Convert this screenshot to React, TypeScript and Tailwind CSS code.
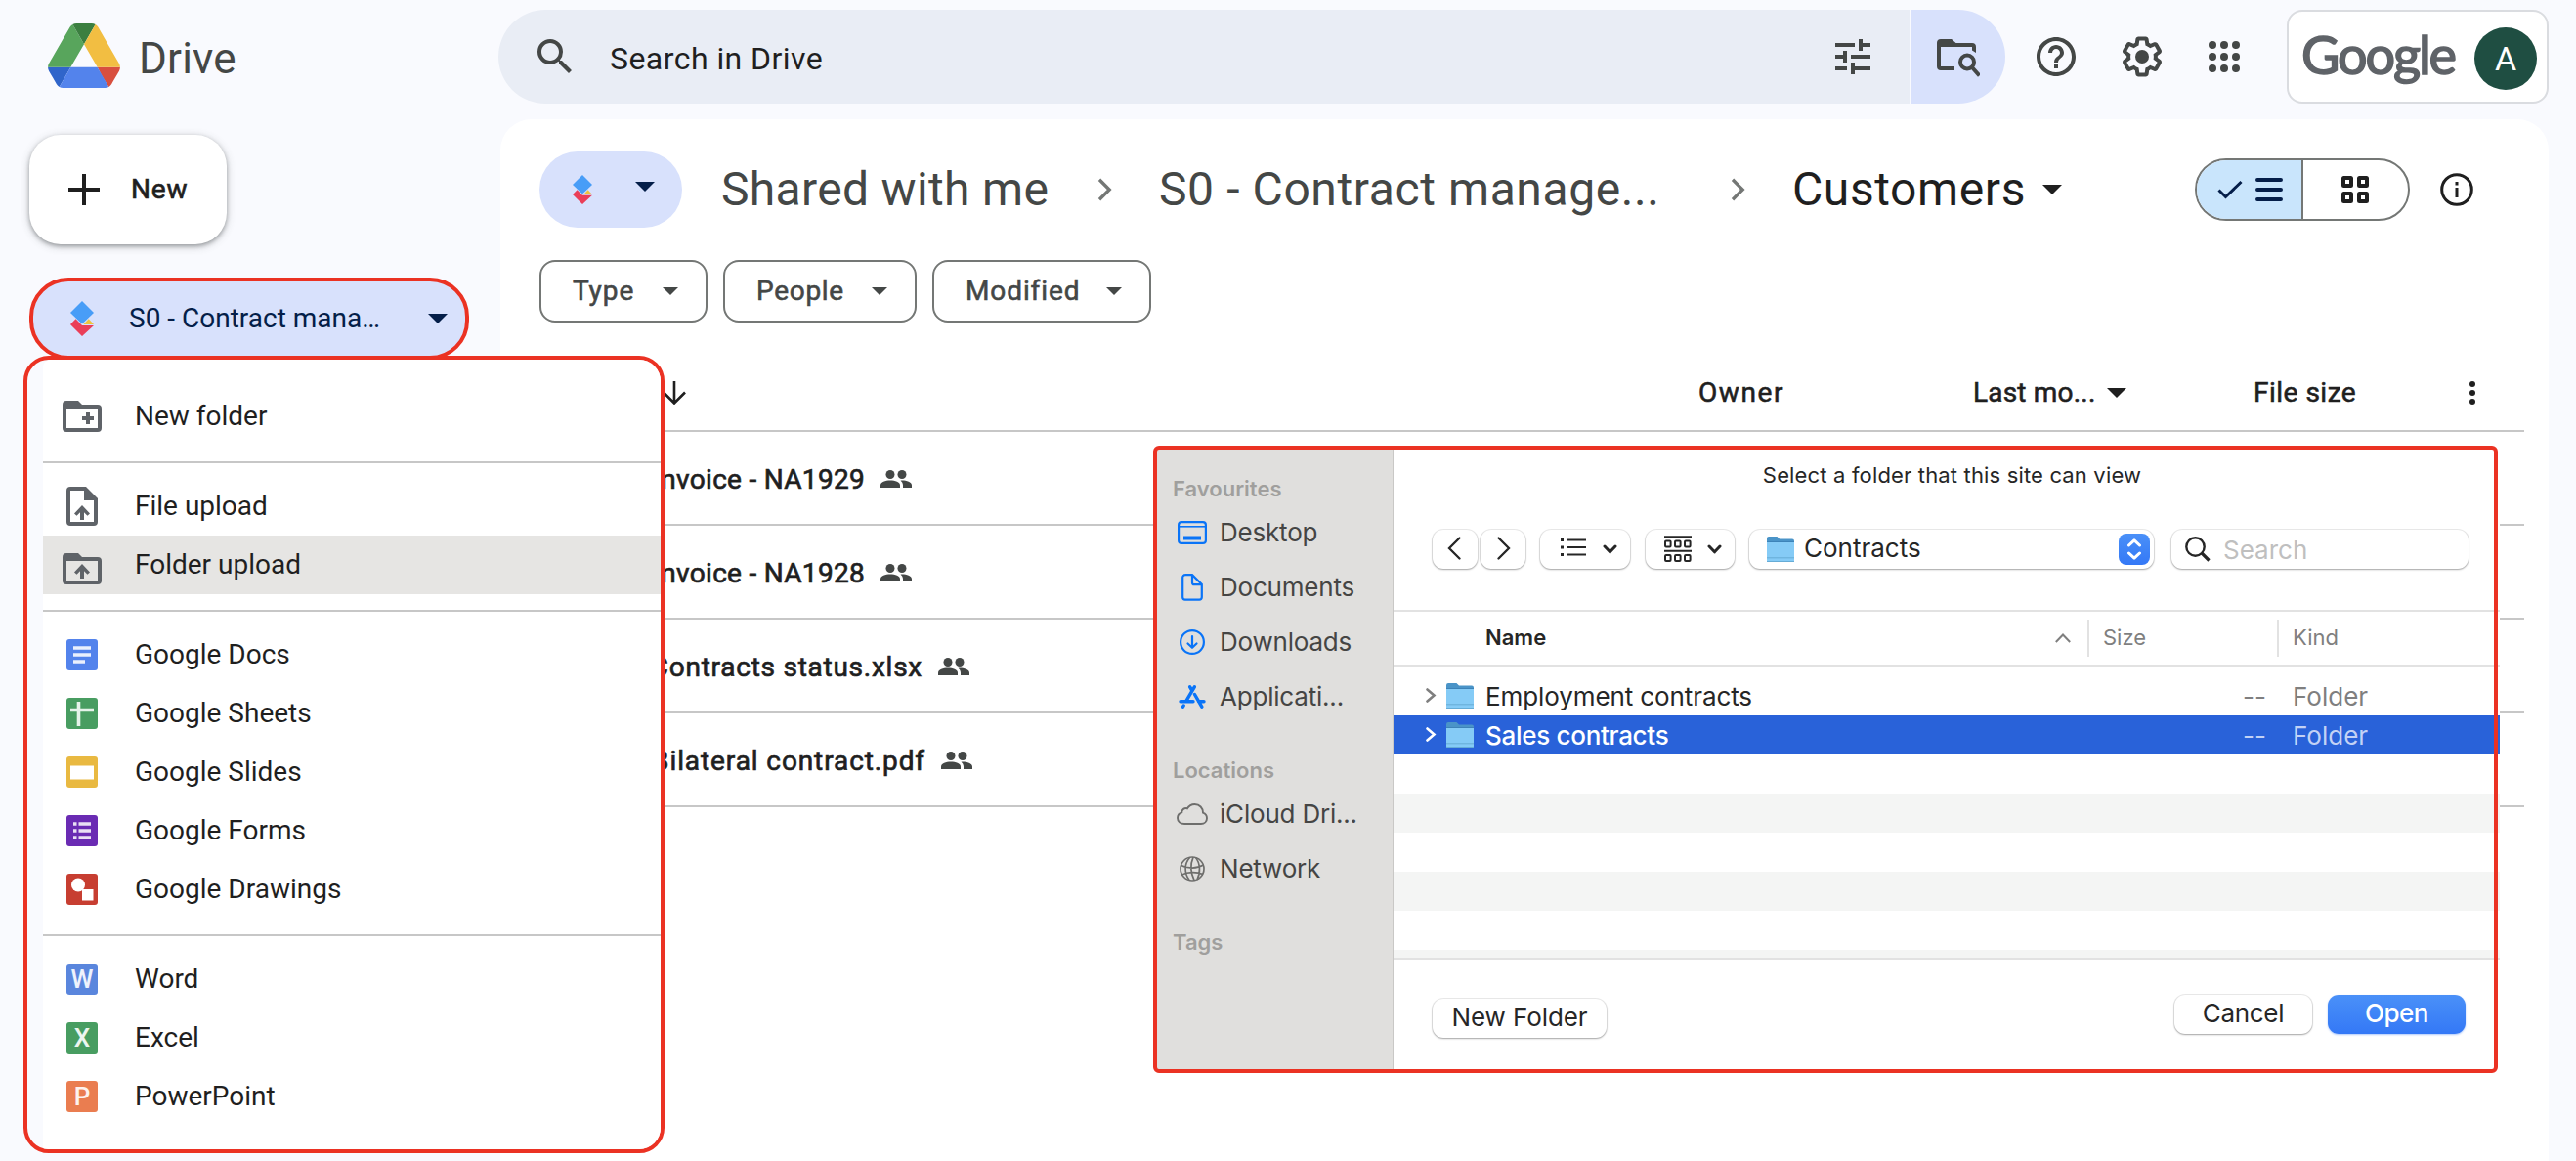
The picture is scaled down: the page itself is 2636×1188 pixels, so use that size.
import type { ReactNode } from "react";
import { MdSearch, MdTune, MdHelpOutline } from "react-icons/md";

/* ---------- Shared glyphs ---------- */

function DriveLogo() {
  return (
    <svg className="h-[66px] w-[74px]" viewBox="0 0 87.3 78">
      <path d="m6.6 66.85 3.85 6.65c.8 1.4 1.95 2.5 3.3 3.3l13.75-23.8h-27.5c0 1.55.4 3.1 1.2 4.5z" fill="#3065ca" />
      <path d="m43.65 25-13.75-23.8c-1.35.8-2.5 1.9-3.3 3.3l-25.4 44a9.06 9.06 0 0 0-1.2 4.5h27.5z" fill="#58a55c" />
      <path d="m73.55 76.8c1.35-.8 2.5-1.9 3.3-3.3l1.6-2.75 7.65-13.25c.8-1.4 1.2-2.95 1.2-4.5h-27.502l5.852 11.5z" fill="#d84f3f" />
      <path d="m43.65 25 13.75-23.8c-1.35-.8-2.9-1.2-4.5-1.2h-18.5c-1.6 0-3.15.45-4.5 1.2z" fill="#3b7f40" />
      <path d="m59.8 53h-32.3l-13.75 23.8c1.35.8 2.9 1.2 4.5 1.2h50.8c1.6 0 3.15-.45 4.5-1.2z" fill="#5383ec" />
      <path d="m73.4 26.5-12.7-22c-.8-1.4-1.95-2.5-3.3-3.3l-13.75 23.8 16.15 28h27.45c0-1.55-.4-3.1-1.2-4.5z" fill="#f2be42" />
    </svg>
  );
}

function BrandMark({ className }: { className: string }) {
  return (
    <svg className={className} viewBox="0 0 24 36">
      <path d="M12 0 24 12 12 23.5 0 12z" fill="#489df7" />
      <path d="M5.5 18.3 12 25H24L12 36 0 24z" fill="#ea3e58" />
      <path d="M18.8 18.3 24 24H13.4z" fill="#edc43e" />
    </svg>
  );
}

function Caret({ className }: { className: string }) {
  return (
    <svg className={className} viewBox="0 0 20 10" preserveAspectRatio="none">
      <path d="M0 0H20L10 10z" fill="currentColor" />
    </svg>
  );
}

function CrumbChevron() {
  return (
    <svg className="h-6 w-4 text-[#747775]" viewBox="0 0 16 24" fill="none" stroke="currentColor" strokeWidth="3.4">
      <path d="M2 1.8 12.2 12 2 22.2" />
    </svg>
  );
}

/* ---------- Header ---------- */

function FolderSearchIcon() {
  return (
    <svg className="h-12 w-12 text-[#444746]" viewBox="0 0 48 48" fill="none">
      <path
        d="M4 10a4 4 0 0 1 4-4h11l4.5 4H40a4 4 0 0 1 4 4v6l-4-2.6V14H8v20h14v4H8a4 4 0 0 1-4-4z"
        fill="currentColor"
      />
      <path d="M8 10h32v4H8z" fill="currentColor" />
      <circle cx="35" cy="29.5" r="7" stroke="currentColor" strokeWidth="4" />
      <path d="m40 35 7.5 8.5" stroke="currentColor" strokeWidth="4" />
    </svg>
  );
}

function SettingsIcon() {
  return (
    <svg className="h-12 w-12 text-[#444746]" viewBox="0 0 24 24" fill="currentColor">
      <path d="M13.85 22.25h-3.7c-.74 0-1.36-.54-1.45-1.27l-.27-1.89c-.27-.14-.53-.29-.79-.46l-1.8.72c-.7.26-1.47-.03-1.81-.65L2.2 15.53c-.35-.66-.2-1.44.36-1.88l1.53-1.19c-.01-.15-.02-.3-.02-.46 0-.15.01-.31.02-.46l-1.52-1.19c-.59-.45-.74-1.26-.37-1.88l1.85-3.19c.34-.62 1.11-.9 1.79-.63l1.81.73c.26-.17.52-.32.78-.46l.27-1.91c.09-.7.71-1.25 1.44-1.25h3.7c.74 0 1.36.54 1.45 1.27l.27 1.89c.27.14.53.29.79.46l1.8-.72c.71-.26 1.48.03 1.82.65l1.84 3.18c.36.66.2 1.44-.36 1.88l-1.52 1.19c.01.15.02.3.02.46s-.01.31-.02.46l1.52 1.19c.56.45.72 1.23.37 1.86l-1.86 3.22c-.34.62-1.11.9-1.8.63l-1.8-.72c-.26.17-.52.32-.78.46l-.27 1.91c-.1.68-.72 1.22-1.46 1.22zm-3.23-2h2.76l.37-2.55.53-.22c.44-.18.88-.44 1.34-.78l.45-.34 2.38.96 1.38-2.4-2.03-1.58.07-.56c.03-.26.06-.51.06-.78s-.03-.53-.06-.78l-.07-.56 2.03-1.58-1.39-2.4-2.39.96-.45-.35c-.42-.32-.87-.58-1.33-.77l-.52-.22-.37-2.55h-2.76l-.37 2.55-.53.21c-.44.19-.88.44-1.34.79l-.45.33-2.38-.95-1.39 2.39 2.03 1.58-.07.56a7 7 0 0 0-.06.79c0 .26.02.53.06.78l.07.56-2.03 1.58 1.38 2.4 2.39-.96.45.35c.43.33.86.58 1.33.77l.53.22z" />
      <circle cx="12" cy="12" r="3.5" />
    </svg>
  );
}

function AppsIcon() {
  return (
    <svg className="h-12 w-12 text-[#444746]" viewBox="0 0 48 48" fill="currentColor">
      {[12, 24, 36].map((y) => [12, 24, 36].map((x) => <circle key={`${x}-${y}`} cx={x} cy={y} r="4" />))}
    </svg>
  );
}

function Header() {
  return (
    <header className="flex h-[122px] items-start">
      <div className="flex w-[510px] shrink-0 items-start pt-6 pl-[49px]">
        <DriveLogo />
        <span className="mt-[3px] ml-[19px] text-[44px] leading-[66px] tracking-[0.2px] text-[#444746]">Drive</span>
      </div>
      <div className="mt-[10px] flex h-24 w-[1444px] shrink-0 items-center rounded-l-[48px] bg-[#e9edf5]">
        <MdSearch className="ml-[34px] size-12 text-[#444746]" />
        <span className="mt-[3px] ml-8 text-[32px] tracking-[0.45px] text-[#1f1f1f]">Search in Drive</span>
        <MdTune className="mr-[34px] ml-auto size-12 text-[#444746]" />
      </div>
      <div className="mt-[10px] ml-[2px] flex h-24 w-24 shrink-0 items-center rounded-r-[48px] bg-[#d8e1fc] pl-[22px]">
        <FolderSearchIcon />
      </div>
      <div className="mt-[34px] ml-7 flex shrink-0">
        <MdHelpOutline className="size-12 text-[#444746]" />
        <div className="ml-10">
          <SettingsIcon />
        </div>
        <div className="ml-9">
          <AppsIcon />
        </div>
      </div>
      <div className="mt-[10px] ml-10 flex h-24 w-[268px] shrink-0 items-center justify-between rounded-2xl border-2 border-[#dadce0] bg-white pr-[10px] pl-[13px]">
        <span className="-mt-1 font-['Lato'] text-[54px] leading-none tracking-[-2.1px] text-[#5f6368] [-webkit-text-stroke:1.6px_#5f6368]">
          Google
        </span>
        <span className="mt-1 flex size-16 items-center justify-center rounded-full bg-[#1f4e42] pt-px text-[34px] text-white">A</span>
      </div>
    </header>
  );
}

/* ---------- Left rail ---------- */

function Rail() {
  return (
    <aside className="w-[512px] shrink-0">
      <button className="mt-4 ml-[30px] flex h-28 w-[202px] items-center rounded-[32px] bg-white pl-10 shadow-[0_2px_4px_rgba(60,64,67,0.4),0_2px_8px_1px_rgba(60,64,67,0.2)]">
        <svg className="size-8" viewBox="0 0 32 32" stroke="#1f1f1f" strokeWidth="4">
          <path d="M16 0v32M0 16h32" />
        </svg>
        <span className="ml-8 text-[28px] tracking-[0.8px] text-[#1f1f1f] [-webkit-text-stroke:0.7px]">New</span>
      </button>
      <button className="mt-[34px] ml-[30px] flex h-[84px] w-[450px] items-center rounded-[40px] border-4 border-[#eb3223] bg-[#d8e1fc] pr-[18px] pl-[38px] text-[#041e49]">
        <BrandMark className="h-9 w-6" />
        <span className="ml-9 text-[28px] whitespace-nowrap">S0 - Contract mana…</span>
        <Caret className="ml-auto h-[10px] w-5" />
      </button>
    </aside>
  );
}

/* ---------- "New" menu ---------- */

function FolderGlyph({ children }: { children: ReactNode }) {
  return (
    <svg className="h-8 w-10" viewBox="0 0 40 32">
      <path d="M4 0h12l4 4h16a4 4 0 0 1 4 4v20a4 4 0 0 1-4 4H4a4 4 0 0 1-4-4V4a4 4 0 0 1 4-4zM4 8v20h32V8z" fill="#5f6368" fillRule="evenodd" />
      {children}
    </svg>
  );
}

const newFolderIcon = (
  <FolderGlyph>
    <path d="M26 12v12M20 18h12" stroke="#5f6368" strokeWidth="4" />
  </FolderGlyph>
);

const folderUploadIcon = (
  <FolderGlyph>
    <path d="M12 19.5 20 11l8 8.500-2.500 2.200-3.500-3.500V26h-4v-7.800l-3.500 3.500z" fill="#5f6368" />
  </FolderGlyph>
);

const fileUploadIcon = (
  <svg className="h-10 w-8" viewBox="0 0 32 40">
    <path d="M4 0h16l12 12v24a4 4 0 0 1-4 4H4a4 4 0 0 1-4-4V4a4 4 0 0 1 4-4zM4 4v32h24V14H18V4z" fill="#5f6368" fillRule="evenodd" />
    <path d="M8 27.500 16 19l8 8.500-2.500 2.200-3.500-3.500V34h-4v-7.800l-3.500 3.500z" fill="#5f6368" />
  </svg>
);

function Tile({ color, children }: { color: string; children: ReactNode }) {
  return (
    <svg className="size-8" viewBox="0 0 32 32">
      <rect width="32" height="32" rx="3" fill={color} />
      {children}
    </svg>
  );
}

function LetterTile({ letter, className }: { letter: string; className: string }) {
  return (
    <span className={`flex size-8 items-center justify-center rounded-[3px] text-[26px] leading-8 font-medium text-white/90 ${className}`}>
      {letter}
    </span>
  );
}

type MenuEntry = { label: string; icon: ReactNode; active?: boolean };

const menuGroups: MenuEntry[][] = [
  [{ label: "New folder", icon: newFolderIcon }],
  [
    { label: "File upload", icon: fileUploadIcon },
    { label: "Folder upload", icon: <span className="mt-2">{folderUploadIcon}</span>, active: true },
  ],
  [
    {
      label: "Google Docs",
      icon: (
        <Tile color="#5383ec">
          <path d="M7 9h18M7 16h18M7 23h12" stroke="#eaf0fd" strokeWidth="3.6" />
        </Tile>
      ),
    },
    {
      label: "Google Sheets",
      icon: (
        <Tile color="#489d61">
          <path d="M12.500 4v25M4 12.500h24" stroke="#e6f3ea" strokeWidth="3.600" />
        </Tile>
      ),
    },
    {
      label: "Google Slides",
      icon: (
        <Tile color="#e9b941">
          <rect x="4" y="9.500" width="24" height="14" fill="#fff" />
        </Tile>
      ),
    },
    {
      label: "Google Forms",
      icon: (
        <Tile color="#6a2bb3">
          <path d="M7 9h3.500M12.500 9H25M7 16h3.500M12.500 16H25M7 23h3.500M12.500 23H25" stroke="#e9dff4" strokeWidth="3.600" />
        </Tile>
      ),
    },
    {
      label: "Google Drawings",
      icon: (
        <Tile color="#c73e31">
          <circle cx="12" cy="11.500" r="7" fill="#fff" />
          <rect x="16" y="16" width="11.500" height="11.500" fill="#fff" />
        </Tile>
      ),
    },
  ],
  [
    { label: "Word", icon: <LetterTile letter="W" className="bg-[#5a86dd]" /> },
    { label: "Excel", icon: <LetterTile letter="X" className="bg-[#489d61]" /> },
    { label: "PowerPoint", icon: <LetterTile letter="P" className="bg-[#ea7d50]" /> },
  ],
];

function NewMenu() {
  return (
    <div className="absolute top-[364px] left-6 h-[816px] w-[656px] overflow-hidden rounded-[26px] border-4 border-[#eb3223] bg-[#f9fafe] pl-4">
      <ul className="h-full rounded-tl-lg bg-white pt-3">
        {menuGroups.map((group, i) => (
          <li key={i} className={i === 0 ? "py-4" : "border-t-2 border-[#c7c7c7] pt-[14px] pb-4"}>
            {group.map((entry) => (
              <div key={entry.label} className={`flex h-[60px] items-center ${entry.active ? "bg-[#e6e5e3]" : ""}`}>
                <span className="ml-5 flex w-10 justify-center">{entry.icon}</span>
                <span className="ml-[34px] text-[28px] text-[#1f1f1f]">{entry.label}</span>
              </div>
            ))}
          </li>
        ))}
      </ul>
    </div>
  );
}

/* ---------- File list ---------- */

function Breadcrumbs() {
  return (
    <div className="flex h-[78px] items-center">
      <button className="flex h-[78px] w-[146px] items-center rounded-[39px] bg-[#d8e1fc] pr-7 pl-[34px] text-[#041e49]">
        <BrandMark className="h-8 w-5" />
        <Caret className="-mt-[6px] ml-auto h-[10px] w-5" />
      </button>
      <span className="ml-10 w-[385px] text-[48px] tracking-[0.33px] whitespace-nowrap text-[#444746]">Shared with me</span>
      <CrumbChevron />
      <span className="ml-[47px] w-[585px] text-[48px] tracking-[0.6px] whitespace-nowrap text-[#444746]">S0 - Contract manage...</span>
      <CrumbChevron />
      <span className="ml-[47px] w-[256px] text-[48px] tracking-[0.6px] text-[#1f1f1f]">Customers</span>
      <Caret className="h-[10px] w-5 text-[#1f1f1f]" />
      <div className="ml-auto flex h-16 w-[220px] overflow-hidden rounded-[32px] border-2 border-[#747775]">
        <div className="flex w-[109px] items-center border-r-2 border-[#747775] bg-[#c9e5fc] pl-[21px] text-[#041e49]">
          <svg className="h-5 w-[26px]" viewBox="0 0 26 20" fill="none" stroke="currentColor" strokeWidth="3">
            <path d="m1.500 10.500 7 7L24.500 2" />
          </svg>
          <svg className="ml-[13px] h-6 w-7" viewBox="0 0 28 24" stroke="currentColor" strokeWidth="4" strokeLinecap="round">
            <path d="M2 2h24M2 12h24M2 22h24" />
          </svg>
        </div>
        <div className="flex flex-1 items-center justify-center pr-[2px]">
          <svg className="size-7" viewBox="0 0 28 28" fill="none" stroke="#1f1f1f" strokeWidth="4">
            <rect x="2" y="2" width="8" height="8" rx="0.500" />
            <rect x="18" y="2" width="8" height="8" rx="0.500" />
            <rect x="2" y="18" width="8" height="8" rx="0.500" />
            <rect x="18" y="18" width="8" height="8" rx="0.500" />
          </svg>
        </div>
      </div>
      <svg className="mr-[77px] ml-[31px] size-[34px]" viewBox="0 0 34 34" fill="none" stroke="#1f1f1f" strokeWidth="3">
        <circle cx="17" cy="17" r="15.300" />
        <path d="M17 15v10M17 9v3.400" />
      </svg>
    </div>
  );
}

function Chip({ label, className }: { label: string; className: string }) {
  return (
    <button className={`flex h-16 items-center justify-between rounded-2xl border-2 border-[#747775] pr-7 pl-8 text-[#444746] ${className}`}>
      <span className="-mt-px text-[28px] [-webkit-text-stroke:0.6px]">{label}</span>
      <Caret className="h-2 w-4" />
    </button>
  );
}

function SharedIcon() {
  return (
    <svg className="mt-[2px] ml-4 h-[18px] w-8" viewBox="0 0 32 18" fill="#444746">
      <circle cx="10" cy="4.500" r="4.500" />
      <circle cx="22" cy="4.500" r="4.500" />
      <path d="M0 18v-2.500C0 12 5 10.500 10 10.500s10 1.500 10 5V18z" />
      <path d="M20.500 10.700c4.500-.5 11.500 1 11.500 4.800V18h-9v-2.500c0-2-1-3.600-2.500-4.800z" />
    </svg>
  );
}

function ListHeader() {
  return (
    <div className="mr-[25px] flex h-28 items-center border-b-2 border-[#c7c7c7] pt-[34px] text-[28px] text-[#1f1f1f] [-webkit-text-stroke:0.6px]">
      <div className="w-[1186px] pl-[126px]">
        <svg className="h-6 w-6" viewBox="0 0 24 24" fill="none" stroke="currentColor" strokeWidth="2.600">
          <path d="M12 0v22M1 11.500l11 11 11-11" />
        </svg>
      </div>
      <span className="w-[281px] tracking-[1.6px]">Owner</span>
      <span className="w-[137px] tracking-[0.2px] whitespace-nowrap">Last mo...</span>
      <span className="w-[150px]">
        <Caret className="h-[10px] w-5" />
      </span>
      <span className="w-[221px] tracking-[0.5px]">File size</span>
      <svg className="h-6 w-[6px]" viewBox="0 0 6 24" fill="currentColor">
        <circle cx="3" cy="3" r="3" />
        <circle cx="3" cy="12" r="3" />
        <circle cx="3" cy="21" r="3" />
      </svg>
    </div>
  );
}

const files = [
  { name: "Invoice - NA1929", className: "w-[219px] tracking-[0.3px]" },
  { name: "Invoice - NA1928", className: "w-[219px] tracking-[0.3px]" },
  { name: "Contracts status.xlsx", className: "w-[278px] tracking-[0.75px]" },
  { name: "Bilateral contract.pdf", className: "w-[281px] tracking-[0.9px]" },
];

function FileList() {
  return (
    <main className="h-[1066px] w-[2096px] shrink-0 rounded-t-[32px] bg-white pt-[33px] pl-10">
      <Breadcrumbs />
      <div className="mt-[33px] flex gap-4">
        <Chip label="Type" className="w-[172px] tracking-[0.9px]" />
        <Chip label="People" className="w-[198px] tracking-[0.7px]" />
        <Chip label="Modified" className="w-[224px] tracking-[0.9px]" />
      </div>
      <ListHeader />
      {files.map((file) => (
        <div key={file.name} className="mr-[25px] flex h-24 items-center border-b-2 border-[#c7c7c7] pl-[114px]">
          <span
            className={`mt-[3px] flex justify-end text-[28px] whitespace-nowrap text-[#1f1f1f] [-webkit-text-stroke:0.7px] ${file.className}`}
          >
            {file.name}
          </span>
          <SharedIcon />
        </div>
      ))}
    </main>
  );
}

/* ---------- Folder picker dialog ---------- */

const blueStroke = { fill: "none", stroke: "#0a74f7", strokeWidth: 2.2 };
const greyStroke = { fill: "none", stroke: "#6e6e6c", strokeWidth: 1.9 };

const places = {
  Desktop: (
    <svg className="h-6 w-[30px]" viewBox="0 0 30 24" {...blueStroke}>
      <rect x="1.100" y="1.100" width="27.800" height="21.800" rx="3" />
      <path d="M1 5.800h28" strokeWidth="1.600" />
      <rect x="6" y="15.500" width="18" height="4" fill="#0a74f7" stroke="none" />
    </svg>
  ),
  Documents: (
    <svg className="h-7 w-[22px]" viewBox="0 0 22 28" {...blueStroke}>
      <path d="M3.500 1.200H11L20.800 11v13a2.600 2.600 0 0 1-2.600 2.600H3.800A2.600 2.600 0 0 1 1.200 24V3.800a2.600 2.600 0 0 1 2.600-2.600z" />
      <path d="M11 1.500v7.700a2 2 0 0 0 2 2h7.500" />
    </svg>
  ),
  Downloads: (
    <svg className="size-[26px]" viewBox="0 0 26 26" {...blueStroke} strokeLinecap="round" strokeLinejoin="round">
      <circle cx="13" cy="13" r="11.900" />
      <path d="M13 7v11.500M8.500 14.500l4.500 4.300 4.500-4.300" />
    </svg>
  ),
  "Applicati...": (
    <svg className="h-6 w-7" viewBox="0 0 28 24" fill="none" stroke="#0a74f7" strokeWidth="3.400" strokeLinecap="round">
      <path d="M16.300 1.800 7.500 16.800M11.700 1.800l1.700 3M16.500 9.500l7.300 12.700M2 16.800h13M20.500 16.800H26M5.200 21l-.7 1.200" />
    </svg>
  ),
  "iCloud Dri...": (
    <svg className="h-[22px] w-8" viewBox="0 0 32 22" {...greyStroke}>
      <path d="M8 21C3.700 21 1 18.300 1 15c0-3 2-5 4.300-5.600C5 6.500 8.200 4.300 11 5.300 12.500 2.700 15.500 1 18.500 1c5 0 8.500 3.800 8.500 8.600 2.400.8 4 2.900 4 5.600 0 3.400-2.600 5.800-6 5.800z" />
    </svg>
  ),
  Network: (
    <svg className="size-[26px]" viewBox="0 0 26 26" {...greyStroke} strokeWidth="1.700">
      <circle cx="13" cy="13" r="12" />
      <path d="M1.500 9.500C8 13 18 13 24.500 9M2.500 19c6-3 15-3 21.500-.5M10.500 1.500C4.500 8 5 18 10 24.500M14 1.200c-3 7-2.500 16 1 23.500M16.500 1.500c5 6 5 16 1.500 22.500" />
    </svg>
  ),
};

function PlaceGroup({ title, names, className }: { title: string; names: (keyof typeof places)[]; className: string }) {
  return (
    <section className={className}>
      <h3 className="mb-1 h-[25px] pl-4 text-[22px] leading-[25px] font-semibold text-[#a09f9d]">{title}</h3>
      {names.map((name) => (
        <div key={name} className="flex h-14 items-center pl-5">
          <span className="flex w-8 justify-center">{places[name]}</span>
          <span className="-mt-[2px] ml-3 text-[26px] tracking-[-0.2px] whitespace-nowrap text-[#454544]">{name}</span>
        </div>
      ))}
    </section>
  );
}

function FolderIcon() {
  return (
    <svg className="h-7 w-7" viewBox="0 0 28 28">
      <path d="M0 3a2 2 0 0 1 2-2h8.500L13 3.500h13a2 2 0 0 1 2 2V12H0z" fill="#4a94c8" />
      <path d="M0 7h28v18.500a1.500 1.500 0 0 1-1.500 1.500h-25A1.500 1.500 0 0 1 0 25.500z" fill="#85cbf6" />
      <path d="M0 6.500h28" stroke="#3d83b8" strokeWidth="1" />
      <path d="M0 22.800h28M0 26.500h28" stroke="#66acd6" strokeWidth="1" />
    </svg>
  );
}

function SmallChevron() {
  return (
    <svg className="h-[10px] w-[15px]" viewBox="0 0 15 10" fill="none" stroke="#262626" strokeWidth="3" strokeLinecap="round" strokeLinejoin="round">
      <path d="m2 2 5.500 5.800L13 2" />
    </svg>
  );
}

function MacButton({ className, children }: { className: string; children?: ReactNode }) {
  return (
    <div
      className={`flex h-10 shrink-0 items-center rounded-[11px] bg-white shadow-[0_0_0_1px_rgba(0,0,0,0.08),0_1px_2px_rgba(0,0,0,0.3)] ${className}`}
    >
      {children}
    </div>
  );
}

function PickerToolbar() {
  return (
    <div className="mt-[30px] flex pl-10">
      <MacButton className="w-[46px] justify-center pr-[3px] pb-[2px]">
        <svg className="h-6 w-[14px]" viewBox="0 0 14 24" fill="none" stroke="#262626" strokeWidth="2.300" strokeLinecap="round">
          <path d="M12.500 1.500 2 12l10.500 10.500" />
        </svg>
      </MacButton>
      <MacButton className="ml-[3px] w-[46px] justify-center pb-[2px] pl-[2px]">
        <svg className="h-6 w-[14px]" viewBox="0 0 14 24" fill="none" stroke="#262626" strokeWidth="2.300" strokeLinecap="round">
          <path d="M1.500 1.500 12 12 1.500 22.500" />
        </svg>
      </MacButton>
      <MacButton className="ml-[15px] w-[92px] justify-between pr-[13px] pl-[21px]">
        <svg className="-mt-1 h-[18px] w-[26px]" viewBox="0 0 26 18" stroke="#262626" strokeWidth="2.200">
          <path d="M6.500 1.500H26M6.500 9H26M6.500 16.500H26" />
          <path d="M0 1.500h3M0 9h3M0 16.500h3" strokeWidth="3" />
        </svg>
        <SmallChevron />
      </MacButton>
      <MacButton className="ml-4 w-[91px] justify-between pr-[13px] pl-[19px]">
        <svg className="h-7 w-7" viewBox="0 0 28 28" fill="none" stroke="#262626" strokeWidth="2">
          <path d="M0 1.200h28M0 15.700h28" />
          <rect x="1" y="5.500" width="5.600" height="6" rx="1" />
          <rect x="11" y="5.500" width="5.600" height="6" rx="1" />
          <rect x="21" y="5.500" width="5.600" height="6" rx="1" />
          <rect x="1" y="20" width="5.600" height="6" rx="1" />
          <rect x="11" y="20" width="5.600" height="6" rx="1" />
          <rect x="21" y="20" width="5.600" height="6" rx="1" />
        </svg>
        <SmallChevron />
      </MacButton>
      <MacButton className="ml-[15px] w-[414px] pr-1 pl-[18px]">
        <FolderIcon />
        <span className="-mt-1 ml-[10px] text-[26px] text-[#262626]">Contracts</span>
        <span className="ml-auto flex size-8 items-center justify-center rounded-lg bg-linear-to-b from-[#4a90f8] to-[#3478f6]">
          <svg className="h-[22px] w-4" viewBox="0 0 16 22" fill="none" stroke="#fff" strokeWidth="3" strokeLinecap="round" strokeLinejoin="round">
            <path d="M2.500 7 8 1.800 13.500 7M2.500 15 8 20.200 13.500 15" />
          </svg>
        </span>
      </MacButton>
      <MacButton className="ml-[18px] w-[304px] pl-[14px]">
        <svg className="h-[26px] w-[26px]" viewBox="0 0 26 26" fill="none" stroke="#262626" strokeWidth="2.400">
          <circle cx="10.500" cy="10.500" r="9.200" />
          <path d="m17 17 7.500 7.500" strokeWidth="3.200" />
        </svg>
        <span className="ml-[13px] text-[26px] text-[#bfbfbf]">Search</span>
      </MacButton>
    </div>
  );
}

function PickerRow({ name, selected = false }: { name: string; selected?: boolean }) {
  return (
    <div className={`flex h-10 items-center pl-[33px] text-[26px] ${selected ? "bg-[#2962d9] font-medium text-white" : "text-[#262626]"}`}>
      <svg
        className={`-mt-[2px] h-[15px] w-[11px] ${selected ? "text-white" : "text-[#7f7f7f]"}`}
        viewBox="0 0 11 15"
        fill="none"
        stroke="currentColor"
        strokeWidth="2.600"
        strokeLinecap="round"
      >
        <path d="m1.500 1.500 7 6-7 6" />
      </svg>
      <span className="ml-[10px]">
        <FolderIcon />
      </span>
      <span className={`ml-3 w-[775px] ${selected ? "tracking-[-0.300px]" : "tracking-[-0.1px]"}`}>{name}</span>
      <span className={`w-[51px] font-normal ${selected ? "text-[#c3d2f5]" : "text-[#7f7f7f]"}`}>--</span>
      <span className={`font-normal ${selected ? "text-[#c3d2f5]" : "text-[#7f7f7f]"}`}>Folder</span>
    </div>
  );
}

function FolderPicker() {
  return (
    <div className="absolute top-[456px] left-[1180px] w-[1378px] font-['Inter']">
      <div className="mt-1 ml-1 flex h-[638px] bg-white">
        <nav className="w-[242px] shrink-0 border-r border-[#c9c8c6] bg-[#e0dfdd]">
          <PlaceGroup title="Favourites" names={["Desktop", "Documents", "Downloads", "Applicati..."]} className="mt-7" />
          <PlaceGroup title="Locations" names={["iCloud Dri...", "Network"]} className="mt-[35px]" />
          <PlaceGroup title="Tags" names={[]} className="mt-[35px]" />
        </nav>
        <div className="flex flex-1 flex-col">
          <h2 className="h-[52px] pl-[11px] text-center text-[22px] leading-[52px] tracking-[0.160px] text-[#262626]">
            Select a folder that this site can view
          </h2>
          <PickerToolbar />
          <div className="mt-[42px] flex h-[58px] items-center border-y-2 border-y-[#e2e2e2] pl-[94px] text-[22px] text-[#7f7f7f]">
            <span className="-mt-px w-[583px] font-semibold text-[#262626]">Name</span>
            <svg className="h-[10px] w-4" viewBox="0 0 16 10" fill="none" stroke="#7f7f7f" strokeWidth="2">
              <path d="M.8 9 8 1.500 15.200 9" />
            </svg>
            <span className="ml-[17px] h-[38px] w-[194px] border-l-2 border-[#e2e2e2] pl-[14px] leading-[36px]">Size</span>
            <span className="h-[38px] border-l-2 border-[#e2e2e2] pl-[14px] leading-[36px]">Kind</span>
          </div>
          <div className="pt-[10px]">
            <PickerRow name="Employment contracts" />
            <PickerRow name="Sales contracts" selected />
            <div className="h-10" />
            <div className="h-10 bg-[#f4f5f4]" />
            <div className="h-10" />
            <div className="h-10 bg-[#f4f5f4]" />
            <div className="h-10" />
            <div className="h-2 bg-[#f4f5f4]" />
          </div>
          <div className="flex flex-1 items-start border-t-2 border-[#e2e2e2] pt-9 pl-10 text-[26px] text-[#262626]">
            <MacButton className="mt-1 w-[178px] justify-center pb-[3px] tracking-[-0.1px]">New Folder</MacButton>
            <MacButton className="ml-[581px] w-[141px] justify-center pb-[3px] tracking-[-0.3px]">Cancel</MacButton>
            <div className="ml-4 flex h-10 w-[141px] items-center justify-center rounded-[11px] bg-linear-to-b from-[#4a90f8] to-[#3478f6] pb-[3px] font-medium tracking-[-0.5px] text-white shadow-[0_1px_2px_rgba(52,120,246,0.4)]">
              Open
            </div>
          </div>
        </div>
      </div>
      <div className="pointer-events-none absolute top-0 left-0 h-[642px] w-[1376px] rounded-md border-4 border-[#eb3223]" />
    </div>
  );
}

export default function App() {
  return (
    <div className="relative h-[1188px] w-[2636px] overflow-hidden bg-[#f9fafe] font-['Roboto',sans-serif]">
      <Header />
      <div className="flex">
        <Rail />
        <FileList />
      </div>
      <NewMenu />
      <FolderPicker />
    </div>
  );
}
